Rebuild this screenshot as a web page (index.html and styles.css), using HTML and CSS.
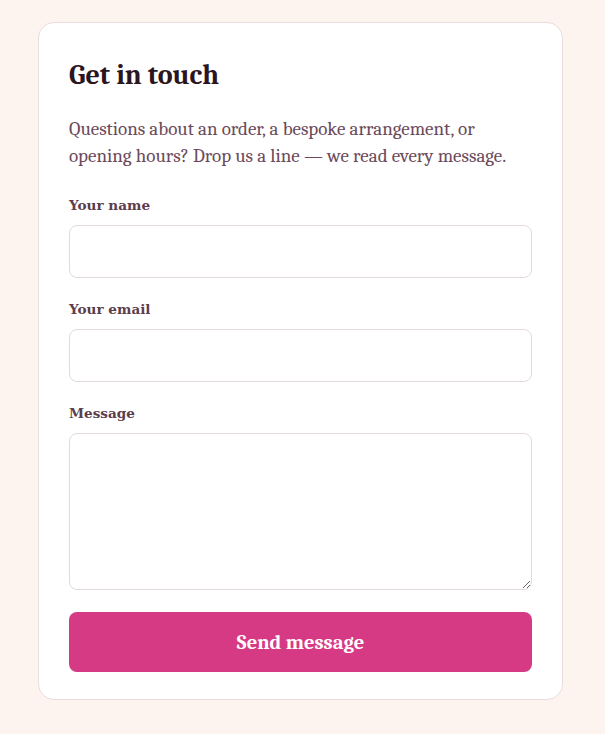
FILE: index.html
```html
<!DOCTYPE html>
<html lang="en">
<head>
<meta charset="utf-8">
<title>Get in touch</title>
<link rel="stylesheet" href="styles.css">
</head>
<body>
<main class="card">
  <h1 class="title">Get in touch</h1>
  <p class="intro">Questions about an order, a bespoke arrangement, or opening hours? Drop us a line — we read every message.</p>
  <form class="form">
    <div class="field">
      <label class="label" for="name">Your name</label>
      <input class="input" id="name" type="text">
    </div>
    <div class="field">
      <label class="label" for="email">Your email</label>
      <input class="input" id="email" type="email">
    </div>
    <div class="field">
      <label class="label" for="msg">Message</label>
      <textarea class="input textarea" id="msg"></textarea>
    </div>
    <button class="button" type="button">Send message</button>
  </form>
</main>
</body>
</html>
```

FILE: styles.css
```css
* { box-sizing: border-box; }
html, body { margin: 0; padding: 0; }
body {
  background: #fdf4ef;
  font-family: "Caladea", Cambria, Georgia, serif;
  padding: 22px 0 0 38px;
  min-height: 734px;
}
.card {
  width: 525px;
  background: #ffffff;
  border: 1px solid #ecdcdc;
  border-radius: 16px;
  padding: 35px 30px 27px;
}
.title {
  margin: 0 0 24px;
  font-size: 28px;
  line-height: 34px;
  font-weight: 700;
  color: #2a1520;
}
.intro {
  margin: 0 0 25px;
  font-size: 19px;
  line-height: 27px;
  color: #6b4a5b;
}
.form {
  display: flex;
  flex-direction: column;
  gap: 21px;
}
.field {
  display: flex;
  flex-direction: column;
  gap: 10px;
}
.label {
  font-family: "DejaVu Serif", serif;
  font-size: 13.6px;
  line-height: 20px;
  font-weight: 700;
  color: #5c3d4c;
}
.input {
  display: block;
  width: 100%;
  height: 53px;
  border: 1px solid #e3dadd;
  border-radius: 8px;
  background: #fff;
  font: inherit;
  padding: 10px 12px;
}
.textarea {
  height: 157px;
  resize: vertical;
}
.button {
  margin-top: 1px;
  height: 60px;
  border: 0;
  border-radius: 8px;
  background: #d63a84;
  color: #fff;
  font-family: inherit;
  font-size: 20.5px;
  font-weight: 700;
}
```
